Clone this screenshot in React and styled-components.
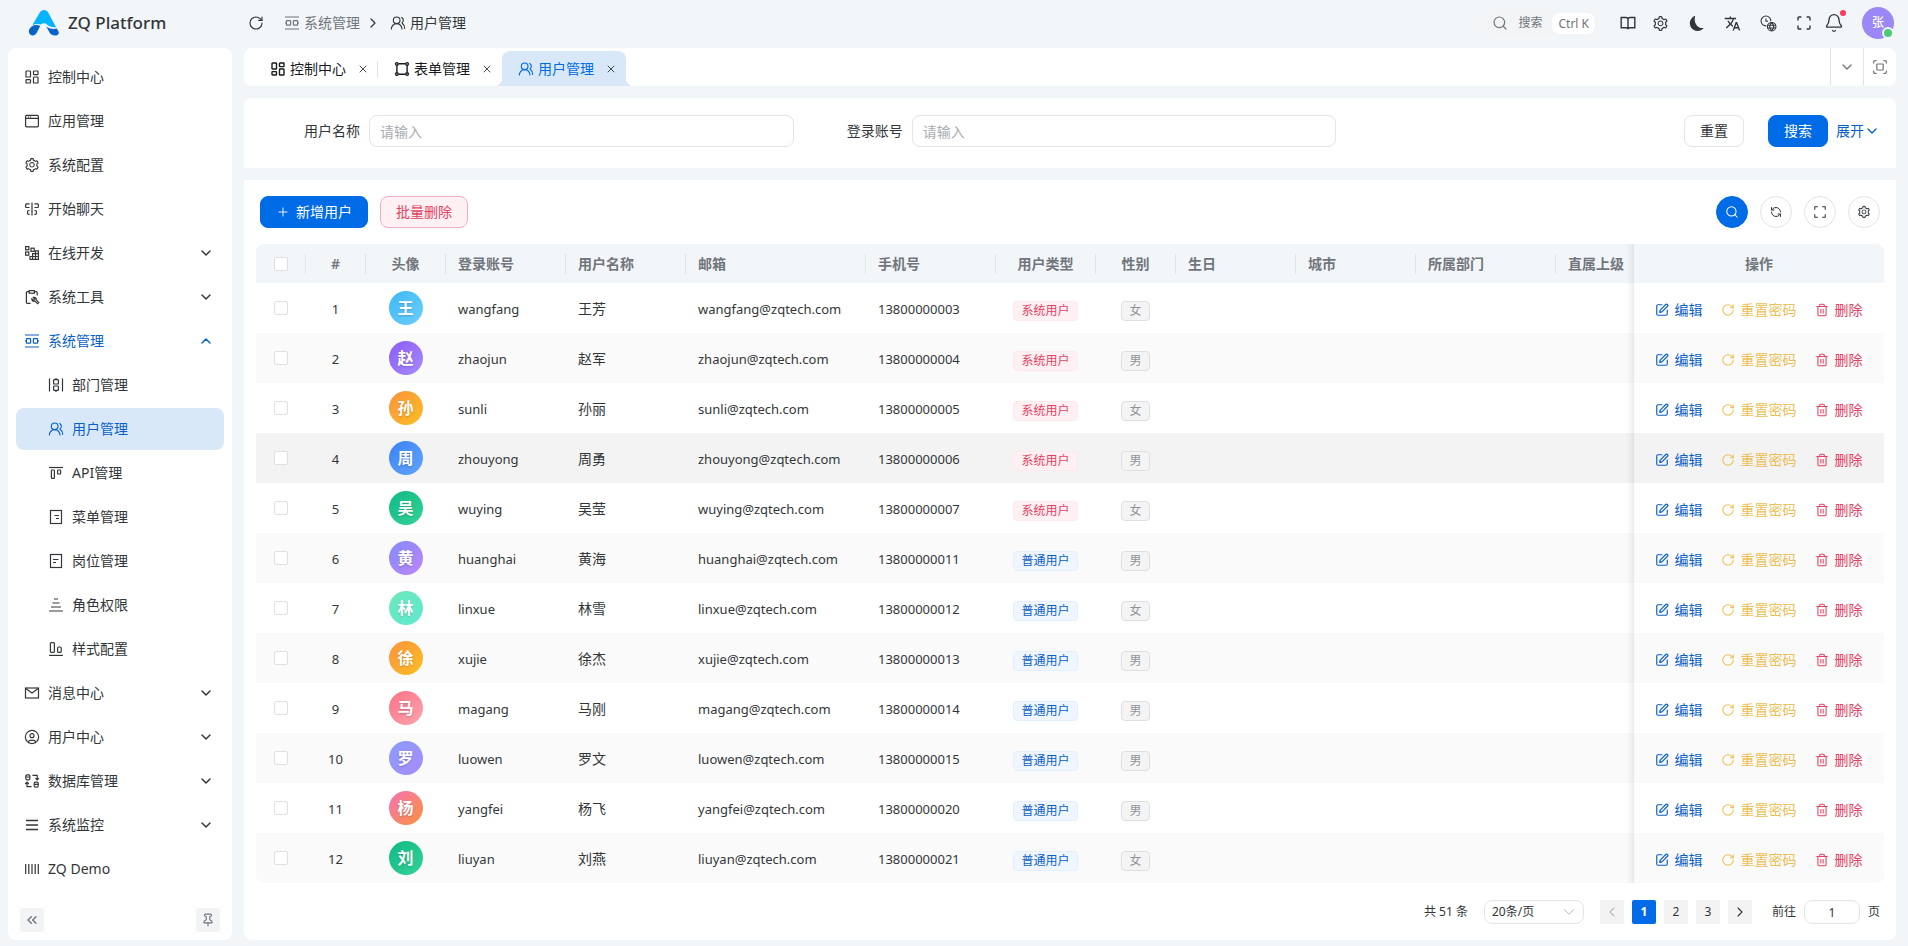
import React from 'react';
import styled, { createGlobalStyle, css } from 'styled-components';
import {
  Bell,
  ChevronDown,
  ChevronLeft,
  ChevronRight,
  ChevronUp,
  ChevronsLeft,
  CircleUser,
  Pin,
  Plus,
  RefreshCcw,
  RotateCw,
  Search,
  SquarePen,
  Trash2,
  UsersRound,
  X,
} from 'lucide-react';
import { AiOutlineSetting } from 'react-icons/ai';
import { MdTranslate } from 'react-icons/md';

const colors = {
  primary: '#006be6',
  link: '#0960c8',
  activeBg: '#d9e8f9',
  page: '#f2f6f9',
  text: '#323639',
  muted: '#71757c',
  border: '#e4e4e7',
  danger: '#e4405f',
  warning: '#ecbf55',
};

const GlobalStyle = createGlobalStyle`
  *,
  *::before,
  *::after {
    box-sizing: border-box;
  }

  body {
    margin: 0;
    background: ${colors.page};
    color: ${colors.text};
    font-family: "Noto Sans", "Noto Sans CJK SC", sans-serif;
    font-size: 14px;
    line-height: 20px;
  }

  button, input, select {
    font: inherit;
    color: inherit;
  }

  button {
    display: inline-flex;
    align-items: center;
    justify-content: center;
    padding: 0;
    border: 0;
    background: none;
    cursor: pointer;
  }

  svg {
    flex: none;
  }
`;

// 16x16 line icons for the menu, the tabs and the header
const glyphs = {
  dashboard: (
    <>
      <rect x="2" y="2" width="4.5" height="6" rx="0.6" />
      <rect x="9.5" y="2" width="4.5" height="3.6" rx="0.6" />
      <rect x="2" y="10.6" width="4.5" height="3.4" rx="0.6" />
      <rect x="9.5" y="8" width="4.5" height="6" rx="0.6" />
    </>
  ),
  app: (
    <>
      <rect x="1.6" y="2.4" width="12.8" height="11.4" rx="1" />
      <path d="M1.6 5.4h12.8M4 3.9h.8M6.2 3.9H7" />
    </>
  ),
  chat: (
    <>
      <path d="M8 1.4v13.2M5.6 2.9H2.6a1 1 0 0 0-1 1v1.6a1 1 0 0 0 1 1h3M5.6 9.5H4.6a1 1 0 0 0-1 1v1.800a1 1 0 0 0 1 1h1" />
      <path d="M10.4 2.9h3a1 1 0 0 1 1 1v1.6a1 1 0 0 1-1 1h-3M10.4 9.5h1a1 1 0 0 1 1 1v1.800a1 1 0 0 1-1 1h-1" />
    </>
  ),
  develop: (
    <>
      <rect x="1.6" y="1.6" width="3.2" height="3.2" />
      <rect x="1.6" y="7" width="3.2" height="3.2" />
      <rect x="7" y="3.2" width="3.2" height="3.2" />
      <path d="M6 14.4V11.500h8.400v2.900zM8.600 14.400V8.600h5.800v3M11.500 14.400V5.800h2.900v3" />
    </>
  ),
  tools: (
    <>
      <path d="M6.6 14.4H3.4a1 1 0 0 1-1-1V3.6a1 1 0 0 1 1-1h1.8M10.4 2.6h1.8a1 1 0 0 1 1 1v2.8" />
      <rect x="5.2" y="1.6" width="5.2" height="2.6" />
      <path d="M12.2 10.8l2.6 2.7-1.2 1.2-2.7-2.6c-1.6.6-3.2-.4-3.1-2.2l1.7 1.4 1.3-1.3-1.5-1.6c1.9-.4 3.3.7 2.9 2.4z" />
    </>
  ),
  system: (
    <>
      <path d="M1 2h14M1 14h14M1 8h1M15 8h-1" />
      <rect x="2.4" y="5.6" width="4.2" height="4.6" rx="0.6" />
      <rect x="9.4" y="5.6" width="4.2" height="4.6" rx="0.6" />
    </>
  ),
  dept: (
    <>
      <path d="M1.5 1.400v13.200M14.500 1.400v13.200M8 1v1.400M8 13.600V15" />
      <rect x="5.6" y="2.6" width="4.800" height="4.400" rx="0.6" />
      <rect x="5.6" y="9" width="4.800" height="4.400" rx="0.6" />
    </>
  ),
  api: (
    <>
      <path d="M1 2.5h14" />
      <rect x="3.4" y="5" width="3" height="8.4" rx="0.6" />
      <rect x="9.6" y="5" width="3" height="4" rx="0.6" />
    </>
  ),
  menu: (
    <>
      <rect x="2.5" y="1.5" width="11" height="13" />
      <path d="M6.5 6.5H11M8 9.500H11" />
    </>
  ),
  post: (
    <>
      <rect x="2.5" y="1.5" width="11" height="13" />
      <path d="M5 6.5h5.500M5 9.500h3" />
    </>
  ),
  role: <path d="M6 2h4M4.5 6h7M3 10h10M1 14h14" />,
  style: (
    <>
      <path d="M1 14.4h14" />
      <rect x="2.4" y="1.6" width="4" height="9.8" rx="1" />
      <rect x="9.6" y="6" width="3.6" height="5.4" rx="1" />
    </>
  ),
  mail: (
    <>
      <rect x="1.5" y="3" width="13" height="10" />
      <path d="M1.8 3.4L8 8l6.2-4.6" />
    </>
  ),
  database: (
    <>
      <rect x="1.8" y="1.8" width="4" height="5" rx="1.2" />
      <rect x="10.2" y="9.2" width="4" height="5" rx="1.2" />
      <path d="M1.8 4h4M10.2 11.4h4M8.4 2.4h4.8v4.4M11.4 5.2l1.8 1.8L15 5.2M7.6 13.6H3V9.4M1.2 11L3 9.2 4.8 11" />
    </>
  ),
  monitor: <path d="M2 3.5h12M2 8h12M2 12.5h12" strokeWidth="1.6" />,
  barcode: <path d="M1.7 3v10M4.8 3v10M8 3v10M11.2 3v10M14.3 3v10" />,
  form: (
    <>
      <path d="M4.5 2.7h7M4.5 13.3h7M2.9 4.5v7M13.1 4.5v7" />
      <circle cx="2.9" cy="2.9" r="1.3" />
      <circle cx="13.1" cy="2.9" r="1.3" />
      <circle cx="2.9" cy="13.1" r="1.3" />
      <circle cx="13.1" cy="13.1" r="1.3" />
    </>
  ),
  book: (
    <path d="M1.2 2.5h4.6C7 2.5 8 3.4 8 4.5c0-1.1 1-2 2.2-2h4.6v10.3h-4.6c-1.2 0-2.2.6-2.2 1.5 0-.9-1-1.5-2.2-1.5H1.2zM8 4.5v9.5" />
  ),
  timezone: (
    <>
      <path d="M6 10.2A4.6 4.6 0 1 1 10.2 5.8M5.6 3.2v2.6h2" />
      <circle cx="11" cy="11" r="4" />
      <path d="M7.2 9.7h7.6M7.2 12.3h7.6M11 7c-2.2 2.4-2.2 5.6 0 8M11 7c2.2 2.4 2.2 5.6 0 8" />
    </>
  ),
  fullscreen: (
    <path d="M2 5.4V3a1 1 0 0 1 1-1h2.4M10.6 2H13a1 1 0 0 1 1 1v2.4M14 10.6V13a1 1 0 0 1-1 1h-2.4M5.4 14H3a1 1 0 0 1-1-1v-2.4" />
  ),
  expand: <path d="M2 5.5V2h3.5M10.5 2H14v3.5M14 10.5V14h-3.5M5.5 14H2v-3.5" />,
  focus: (
    <>
      <path d="M1.6 4.6V3a1.4 1.4 0 0 1 1.4-1.4h1.6M11.4 1.6H13A1.4 1.4 0 0 1 14.4 3v1.6M14.4 11.4V13a1.4 1.4 0 0 1-1.4 1.4h-1.6M4.6 14.4H3A1.4 1.4 0 0 1 1.6 13v-1.6" />
      <rect x="4.8" y="5" width="6.4" height="6" rx="0.4" />
    </>
  ),
  moon: (
    <path
      d="M6.800.8A7.300 7.300 0 1 0 14.800 12.200C9.200 13.200 4.800 7 6.800.8z"
      fill="currentColor"
      stroke="none"
    />
  ),
};

const Glyph = ({ name, size = 16, weight = 1.2 }) => (
  <svg
    width={size}
    height={size}
    viewBox="0 0 16 16"
    fill="none"
    stroke="currentColor"
    strokeWidth={weight}
    aria-hidden="true"
  >
    {glyphs[name]}
  </svg>
);

const Page = styled.div`
  display: flex;
  flex-direction: column;
  min-height: 100vh;
`;

const Header = styled.header`
  display: flex;
  align-items: center;
  height: 48px;
  padding: 0 14px 2px 8px;
`;

const Brand = styled.a`
  display: flex;
  align-items: center;
  gap: 8px;
  width: 236px;
  padding-left: 20px;
  color: inherit;
  font-size: 17px;
  font-weight: 500;
  text-decoration: none;
`;

const IconButton = styled.button`
  width: ${({ $width }) => $width || 32}px;
  height: 32px;
  margin-left: ${({ $gap }) => $gap || 0}px;
`;

const Crumbs = styled.nav`
  display: flex;
  align-items: center;
  margin-left: 16px;

  & > svg {
    margin: 0 9px 0 5px;
  }
`;

const Crumb = styled.a`
  display: flex;
  align-items: center;
  gap: 4px;
  color: ${({ $current }) => ($current ? colors.text : colors.muted)};
  text-decoration: none;
`;

const HeaderTools = styled.div`
  display: flex;
  align-items: center;
  margin-left: auto;
`;

const SearchPill = styled.button`
  gap: 10px;
  height: 26px;
  margin-right: 15px;
  padding: 0 2px 0 8px;
  border-radius: 13px;
  background: #f3f4f5;
  color: ${colors.muted};
  font-size: 12px;
`;

const Shortcut = styled.kbd`
  padding: 0 6px;
  border-radius: 8px;
  background: #fff;
  font-family: inherit;
  line-height: 21px;
`;

const BellButton = styled(IconButton)`
  position: relative;

  &::after {
    content: '';
    position: absolute;
    top: 3px;
    right: 2px;
    width: 6px;
    height: 6px;
    border-radius: 50%;
    background: #ff385c;
  }
`;

const Profile = styled.button`
  position: relative;
  width: 32px;
  height: 32px;
  margin: 0 0 0 14px;
  border-radius: 50%;
  background: #9b87f5;
  color: #fff;
  font-size: 12px;
  font-weight: 500;

  &::after {
    content: '';
    position: absolute;
    right: 0;
    bottom: 0;
    width: 12px;
    height: 12px;
    border: 2px solid ${colors.page};
    border-radius: 50%;
    background: #4fc87a;
  }
`;

const Body = styled.div`
  display: grid;
  flex: 1;
  grid-template-columns: 224px minmax(0, 1fr);
  gap: 12px;
  padding: 0 12px 6px 8px;
`;

const Sidebar = styled.aside`
  display: flex;
  flex-direction: column;
  padding: 8px 8px 0;
  border-radius: 8px;
  background: #fff;
`;

const MenuList = styled.nav`
  display: flex;
  flex: 1;
  flex-direction: column;
  gap: 2px;
`;

const MenuItem = styled.a`
  display: flex;
  align-items: center;
  gap: 8px;
  height: 42px;
  padding: 0 10px 0 ${({ $child }) => ($child ? 32 : 8)}px;
  border-radius: 8px;
  background: ${({ $active }) => ($active ? colors.activeBg : 'transparent')};
  color: ${({ $active, $open }) => ($active || $open ? colors.link : 'inherit')};
  text-decoration: none;

  & > svg:last-child:not(:first-child) {
    margin-left: auto;
  }
`;

const SidebarFoot = styled.div`
  display: flex;
  justify-content: space-between;
  padding: 8px 4px;
`;

const SmallButton = styled.button`
  width: 24px;
  height: 24px;
  border-radius: 3px;
  background: #f3f4f5;
  color: ${colors.muted};
`;

const Main = styled.main`
  display: flex;
  flex-direction: column;
  gap: 12px;
`;

const TabBar = styled.div`
  display: flex;
  align-items: stretch;
  height: 38px;
  padding-left: 10px;
  border-radius: 8px;
  background: #fff;
`;

const flare = css`
  content: '';
  position: absolute;
  bottom: 0;
  width: 8px;
  height: 8px;
`;

const Tab = styled.div`
  position: relative;
  display: flex;
  align-items: center;
  width: 124px;
  margin-top: 3px;
  padding: 0 8px 0 16px;
  border-radius: 8px 8px 0 0;

  ${({ $active }) =>
    $active &&
    css`
      background: ${colors.activeBg};
      color: ${colors.primary};

      &::before {
        ${flare}
        left: -8px;
        background: radial-gradient(circle at 0 0, transparent 8px, ${colors.activeBg} 8px);
      }

      &::after {
        ${flare}
        right: -8px;
        background: radial-gradient(circle at 100% 0, transparent 8px, ${colors.activeBg} 8px);
      }
    `}
`;

const TabLink = styled.a`
  display: flex;
  flex: 1;
  align-items: center;
  gap: 4px;
  color: ${({ $active }) => ($active ? colors.primary : '#17191c')};
  text-decoration: none;
`;

const TabClose = styled.button`
  width: 14px;
  height: 14px;
  color: ${colors.text};
`;

const TabDivider = styled.span`
  align-self: center;
  width: 1px;
  height: 16px;
  margin: 4px 0 0 -1px;
  background: ${colors.border};
`;

const TabTools = styled.div`
  display: flex;
  margin-left: auto;
`;

const TabTool = styled.button`
  width: 33px;
  border-left: 1px solid ${colors.border};
  color: ${colors.muted};
`;

const Filters = styled.form`
  display: grid;
  grid-template-columns: repeat(3, minmax(0, 1fr));
  padding: 17px 12px 21px;
  border-radius: 8px 8px 0 0;
  background: #fff;
`;

const Field = styled.div`
  display: flex;
  align-items: center;
  padding-right: 5px;
`;

const FieldLabel = styled.label`
  flex: none;
  width: 113px;
  padding-right: 9px;
  text-align: right;
`;

const Input = styled.input`
  flex: 1;
  min-width: 0;
  height: 32px;
  padding: 0 10px;
  border: 1px solid ${colors.border};
  border-radius: 8px;
  background: #fff;
  outline: 0;

  &::placeholder {
    color: #a8abb2;
  }
`;

const FilterActions = styled.div`
  display: flex;
  align-items: center;
  justify-content: flex-end;
  padding-right: 4px;
`;

const variants = {
  plain: css`
    border: 1px solid ${colors.border};
    background: #fff;
  `,
  primary: css`
    border: 1px solid ${colors.primary};
    background: ${colors.primary};
    color: #fff;
  `,
  danger: css`
    border: 1px solid #f8b0c0;
    background: #fff1f3;
    color: ${colors.danger};
  `,
};

const Button = styled.button`
  gap: 6px;
  height: 32px;
  padding: 0 15px;
  border-radius: 8px;
  white-space: nowrap;
  ${({ $variant }) => variants[$variant || 'plain']};
`;

const WideButton = styled(Button)`
  width: 60px;
  margin-right: ${({ $gap }) => $gap}px;
  padding: 0;
`;

const ExpandButton = styled.button`
  color: ${colors.link};
`;

const ListCard = styled.section`
  display: flex;
  flex: 1;
  flex-direction: column;
  padding: 16px 12px;
  border-radius: 0 0 8px 8px;
  background: #fff;
`;

const Toolbar = styled.div`
  display: flex;
  gap: 12px;
  padding: 0 4px 16px;
`;

const ToolbarRight = styled.div`
  display: flex;
  gap: 12px;
  margin-left: auto;
`;

const RoundButton = styled.button`
  width: 32px;
  height: 32px;
  border-radius: 50%;
  ${({ $variant }) => variants[$variant || 'plain']};
`;

const TableScroll = styled.div`
  overflow-x: auto;
  border-radius: 8px;
  scrollbar-width: none;
`;

const Table = styled.table`
  width: 100%;
  min-width: 1670px;
  table-layout: fixed;
  border-collapse: separate;
  border-spacing: 0;
`;

const stickyCell = css`
  position: sticky;
  right: 0;
  z-index: 1;

  &::before {
    content: '';
    position: absolute;
    top: 0;
    bottom: 0;
    left: -10px;
    width: 10px;
    box-shadow: inset -10px 0 10px -10px rgba(0, 0, 0, 0.15);
  }
`;

const HeadCell = styled.th`
  height: 39px;
  padding: 0;
  background: ${colors.page};
  color: ${colors.muted};
  font-weight: 600;
  text-align: ${({ $align }) => $align || 'left'};
  ${({ $sticky }) => $sticky && stickyCell};
`;

const HeadLabel = styled.div`
  display: grid;
  align-items: center;
  height: 20px;
  padding: 0 12px;
  border-right: 1px solid ${({ $last }) => ($last ? 'transparent' : '#e1e5ea')};
`;

const rowBackground = ({ $index }) => {
  if ($index === 3) return '#f3f3f3';
  return $index % 2 ? '#fafafa' : '#fff';
};

const Row = styled.tr`
  background: ${rowBackground};
`;

const Cell = styled.td`
  height: 50px;
  padding: ${({ $text }) => ($text ? 2 : 0)}px 13px 0 12px;
  background: inherit;
  text-align: ${({ $align }) => $align || 'left'};
  font-size: ${({ $latin }) => ($latin ? 13 : 14)}px;
  ${({ $sticky }) => $sticky && stickyCell};
`;

const Checkbox = styled.input.attrs({ type: 'checkbox' })`
  display: block;
  appearance: none;
  width: 14px;
  height: 14px;
  margin: 0 auto;
  border: 1px solid #dfe0e3;
  border-radius: 2px;
  background: #fff;
`;

const Avatar = styled.div`
  display: flex;
  align-items: center;
  justify-content: center;
  width: 34px;
  height: 34px;
  margin: 0 auto;
  border-radius: 50%;
  background: linear-gradient(135deg, ${({ $from }) => $from}, ${({ $to }) => $to});
  color: #fff;
  font-size: 16px;
  font-weight: 700;
  text-shadow: 0 1px 2px rgba(0, 0, 0, 0.2);
`;

const tags = {
  系统用户: ['#fff1f3', '#ffe9ed', colors.danger],
  普通用户: ['#eff6ff', '#e4effc', colors.link],
};

const Tag = styled.span`
  display: inline-block;
  height: 20px;
  margin-top: 4px;
  padding: 0 7px;
  border: 1px solid ${({ $tone }) => $tone[1]};
  border-radius: 4px;
  background: ${({ $tone }) => $tone[0]};
  color: ${({ $tone }) => $tone[2]};
  font-size: 12px;
  line-height: 18px;
  vertical-align: middle;
`;

const Actions = styled.div`
  display: flex;
  justify-content: center;
  gap: 18px;
  padding-top: 4px;
`;

const Action = styled.button`
  gap: 6px;
  color: ${({ $color }) => $color};
  white-space: nowrap;
`;

const Pagination = styled.nav`
  display: flex;
  align-items: center;
  justify-content: flex-end;
  gap: 8px;
  margin-top: auto;
  padding: 17px 4px 0 0;
  font-size: 12px;
`;

const PageSize = styled.label`
  display: grid;
  align-items: center;
  width: 100px;
  margin: 0 8px;

  & > * {
    grid-area: 1 / 1;
  }

  & > svg {
    justify-self: end;
    margin-right: 6px;
    color: #a8abb2;
    pointer-events: none;
  }
`;

const Select = styled.select`
  appearance: none;
  width: 100%;
  height: 24px;
  padding: 0 7px;
  border: 1px solid ${colors.border};
  border-radius: 8px;
  background: #fff;
`;

const PageButton = styled.button`
  width: 24px;
  height: 24px;
  border-radius: 2px;
  background: ${({ $active }) => ($active ? colors.primary : '#f3f3f4')};
  color: ${({ $active, $off }) => {
    if ($active) return '#fff';
    return $off ? '#b9bbc0' : colors.text;
  }};
  font-weight: ${({ $active }) => ($active ? 700 : 400)};
`;

const Jump = styled.label`
  display: flex;
  align-items: center;
  gap: 8px;
  margin-left: 12px;
`;

const JumpInput = styled(Input)`
  flex: none;
  width: 56px;
  height: 24px;
  text-align: center;
`;

const menu = [
  { icon: 'dashboard', label: '控制中心' },
  { icon: 'app', label: '应用管理' },
  { icon: 'setting', label: '系统配置' },
  { icon: 'chat', label: '开始聊天' },
  { icon: 'develop', label: '在线开发', group: true },
  { icon: 'tools', label: '系统工具', group: true },
  { icon: 'system', label: '系统管理', group: true, open: true },
  { icon: 'dept', label: '部门管理', child: true },
  { icon: 'users', label: '用户管理', child: true, active: true },
  { icon: 'api', label: 'API管理', child: true },
  { icon: 'menu', label: '菜单管理', child: true },
  { icon: 'post', label: '岗位管理', child: true },
  { icon: 'role', label: '角色权限', child: true },
  { icon: 'style', label: '样式配置', child: true },
  { icon: 'mail', label: '消息中心', group: true },
  { icon: 'user', label: '用户中心', group: true },
  { icon: 'database', label: '数据库管理', group: true },
  { icon: 'monitor', label: '系统监控', group: true },
  { icon: 'barcode', label: 'ZQ Demo' },
];

const tabs = [
  { icon: 'dashboard', label: '控制中心' },
  { icon: 'form', label: '表单管理' },
  { icon: 'users', label: '用户管理', active: true },
];

const columns = [
  { label: '#', width: 60, align: 'center' },
  { label: '头像', width: 80, align: 'center' },
  { label: '登录账号', width: 120 },
  { label: '用户名称', width: 120 },
  { label: '邮箱', width: 180 },
  { label: '手机号', width: 130 },
  { label: '用户类型', width: 100, align: 'center' },
  { label: '性别', width: 80, align: 'center' },
  { label: '生日', width: 120 },
  { label: '城市', width: 120 },
  { label: '所属部门', width: 140 },
  { label: '直属上级', width: 120 },
];

const users = [
  ['wangfang', '王芳', '13800000003', '系统用户', '女', '#3db8f5', '#6dcff9'],
  ['zhaojun', '赵军', '13800000004', '系统用户', '男', '#8b5cf6', '#a78bfa'],
  ['sunli', '孙丽', '13800000005', '系统用户', '女', '#fb923c', '#fbbf24'],
  ['zhouyong', '周勇', '13800000006', '系统用户', '男', '#3b82f6', '#60a5fa'],
  ['wuying', '吴莹', '13800000007', '系统用户', '女', '#10b981', '#34d399'],
  ['huanghai', '黄海', '13800000011', '普通用户', '男', '#818cf8', '#c084fc'],
  ['linxue', '林雪', '13800000012', '普通用户', '女', '#6ee7b7', '#5eead4'],
  ['xujie', '徐杰', '13800000013', '普通用户', '男', '#fb923c', '#fbbf24'],
  ['magang', '马刚', '13800000014', '普通用户', '男', '#fb7185', '#fda4af'],
  ['luowen', '罗文', '13800000015', '普通用户', '男', '#8b9cfb', '#a78bfa'],
  ['yangfei', '杨飞', '13800000020', '普通用户', '男', '#f472b6', '#fb923c'],
  ['liuyan', '刘燕', '13800000021', '普通用户', '女', '#10b981', '#34d399'],
];

const genderTone = ['#f4f4f5', '#dedfe2', '#909399'];

const Icon = ({ name, weight }) => {
  if (name === 'setting') return <AiOutlineSetting size={16} />;
  if (name === 'users') return <UsersRound size={16} strokeWidth={1.7} />;
  if (name === 'user') return <CircleUser size={16} strokeWidth={1.7} />;
  return <Glyph name={name} weight={weight} />;
};

const Logo = () => (
  <svg width="32" height="28" viewBox="0 0 32 28" aria-hidden="true">
    <path
      d="M11.800 3.600C13.400.2 18.600.2 20.200 3.600L28 18c-3.600.6-6.200-.4-9-2.600-1.800-1.500-4.200-1.500-6 .1-2.400-.8-5.400-.8-8.600.6z"
      fill="#06b4fd"
    />
    <path
      d="M3.600 17.400c2.600-1.500 6-1.700 8.600-.5l-3.600 7.200c-1.200 2.300-3.400 2.900-5.200 2.100C.8 25.200.2 22.400 1.400 20z"
      fill="#0a63c6"
    />
    <path
      d="M18 17.200c2.800 2.400 6.400 3.200 10.800 2.400l1.700 2.800c1 2-.6 4.200-3.300 4.200-2.500 0-4.400-.8-5.600-3z"
      fill="#0a63c6"
    />
  </svg>
);

const SideMenu = () => (
  <MenuList aria-label="主菜单">
    {menu.map(({ icon, label, group, open, child, active }) => (
      <MenuItem key={label} href="#" $child={child} $active={active} $open={open}>
        <Icon name={icon} />
        <span>{label}</span>
        {group &&
          (open ? (
            <ChevronUp size={16} strokeWidth={2.2} />
          ) : (
            <ChevronDown size={16} strokeWidth={2.2} />
          ))}
      </MenuItem>
    ))}
  </MenuList>
);

const TopBar = () => (
  <Header>
    <Brand href="#">
      <Logo />
      ZQ Platform
    </Brand>
    <IconButton $width={24} aria-label="刷新">
      <RotateCw size={16} strokeWidth={1.7} />
    </IconButton>
    <Crumbs aria-label="面包屑">
      <Crumb href="#">
        <Glyph name="system" />
        系统管理
      </Crumb>
      <ChevronRight size={16} strokeWidth={1.8} />
      <Crumb href="#" $current>
        <Icon name="users" />
        用户管理
      </Crumb>
    </Crumbs>
    <HeaderTools>
      <SearchPill>
        <Search size={16} strokeWidth={1.8} />
        搜索
        <Shortcut>Ctrl K</Shortcut>
      </SearchPill>
      <IconButton aria-label="文档">
        <Glyph name="book" weight={1.4} />
      </IconButton>
      <IconButton aria-label="设置">
        <AiOutlineSetting size={17} />
      </IconButton>
      <IconButton $gap={4} aria-label="主题">
        <Glyph name="moon" size={17} />
      </IconButton>
      <IconButton $gap={4} aria-label="语言">
        <MdTranslate size={17} />
      </IconButton>
      <IconButton $gap={4} aria-label="时区">
        <Glyph name="timezone" size={17} weight={1} />
      </IconButton>
      <IconButton $gap={4} aria-label="全屏">
        <Glyph name="fullscreen" weight={1.4} />
      </IconButton>
      <BellButton $width={28} aria-label="通知">
        <Bell size={20} strokeWidth={1.6} />
      </BellButton>
      <Profile>张</Profile>
    </HeaderTools>
  </Header>
);

const Tabs = () => (
  <TabBar>
    {tabs.map(({ icon, label, active }, index) => (
      <React.Fragment key={label}>
        <Tab $active={active}>
          <TabLink href="#" $active={active}>
            <Icon name={icon} weight={1.4} />
            {label}
          </TabLink>
          <TabClose aria-label={`关闭${label}`}>
            <X size={12} strokeWidth={1.8} />
          </TabClose>
        </Tab>
        {index === 0 && <TabDivider />}
      </React.Fragment>
    ))}
    <TabTools>
      <TabTool aria-label="更多标签">
        <ChevronDown size={16} strokeWidth={2} />
      </TabTool>
      <TabTool aria-label="最大化">
        <Glyph name="focus" />
      </TabTool>
    </TabTools>
  </TabBar>
);

const FilterBar = () => (
  <Filters onSubmit={event => event.preventDefault()}>
    <Field>
      <FieldLabel htmlFor="name">用户名称</FieldLabel>
      <Input id="name" placeholder="请输入" />
    </Field>
    <Field>
      <FieldLabel htmlFor="account">登录账号</FieldLabel>
      <Input id="account" placeholder="请输入" />
    </Field>
    <FilterActions>
      <WideButton type="reset" $gap={24}>
        重置
      </WideButton>
      <WideButton type="submit" $variant="primary" $gap={8}>
        搜索
      </WideButton>
      <ExpandButton type="button">
        展开
        <ChevronDown size={16} strokeWidth={2} />
      </ExpandButton>
    </FilterActions>
  </Filters>
);

const UserRow = ({ user, index }) => {
  const [account, name, phone, type, gender, from, to] = user;
  return (
    <Row $index={index}>
      <Cell $align="center">
        <Checkbox aria-label={`选择${name}`} />
      </Cell>
      <Cell $align="center" $text $latin>
        {index + 1}
      </Cell>
      <Cell $align="center">
        <Avatar $from={from} $to={to}>
          {name[0]}
        </Avatar>
      </Cell>
      <Cell $text $latin>
        {account}
      </Cell>
      <Cell $text>{name}</Cell>
      <Cell $text $latin>
        {account}@zqtech.com
      </Cell>
      <Cell $text $latin>
        {phone}
      </Cell>
      <Cell $align="center" $text>
        <Tag $tone={tags[type]}>{type}</Tag>
      </Cell>
      <Cell $align="center" $text>
        <Tag $tone={genderTone}>{gender}</Tag>
      </Cell>
      <Cell />
      <Cell />
      <Cell />
      <Cell />
      <Cell $sticky>
        <Actions>
          <Action $color={colors.link}>
            <SquarePen size={14} strokeWidth={2} />
            编辑
          </Action>
          <Action $color={colors.warning}>
            <RotateCw size={14} strokeWidth={1.8} />
            重置密码
          </Action>
          <Action $color={colors.danger}>
            <Trash2 size={14} strokeWidth={1.8} />
            删除
          </Action>
        </Actions>
      </Cell>
    </Row>
  );
};

const UserTable = () => (
  <TableScroll>
    <Table>
      <colgroup>
        <col width="50" />
        {columns.map(({ label, width }) => (
          <col key={label} width={width} />
        ))}
        <col width="250" />
      </colgroup>
      <thead>
        <tr>
          <HeadCell>
            <HeadLabel>
              <Checkbox aria-label="全选" />
            </HeadLabel>
          </HeadCell>
          {columns.map(({ label, align }, index) => (
            <HeadCell key={label} $align={align}>
              <HeadLabel $last={index === columns.length - 1}>{label}</HeadLabel>
            </HeadCell>
          ))}
          <HeadCell $align="center" $sticky>
            操作
          </HeadCell>
        </tr>
      </thead>
      <tbody>
        {users.map((user, index) => (
          <UserRow key={user[0]} user={user} index={index} />
        ))}
      </tbody>
    </Table>
  </TableScroll>
);

const Pager = () => (
  <Pagination aria-label="分页">
    <span>共 51 条</span>
    <PageSize>
      <Select aria-label="每页条数">
        <option>20条/页</option>
      </Select>
      <ChevronDown size={18} strokeWidth={1.2} />
    </PageSize>
    <PageButton $off aria-label="上一页">
      <ChevronLeft size={16} strokeWidth={1.6} />
    </PageButton>
    <PageButton $active>1</PageButton>
    <PageButton>2</PageButton>
    <PageButton>3</PageButton>
    <PageButton aria-label="下一页">
      <ChevronRight size={16} strokeWidth={1.6} />
    </PageButton>
    <Jump>
      前往
      <JumpInput defaultValue="1" />
      页
    </Jump>
  </Pagination>
);

const App = () => (
  <Page>
    <GlobalStyle />
    <TopBar />
    <Body>
      <Sidebar>
        <SideMenu />
        <SidebarFoot>
          <SmallButton aria-label="收起菜单">
            <ChevronsLeft size={16} />
          </SmallButton>
          <SmallButton aria-label="固定菜单">
            <Pin size={14} />
          </SmallButton>
        </SidebarFoot>
      </Sidebar>
      <Main>
        <Tabs />
        <FilterBar />
        <ListCard>
          <Toolbar>
            <Button $variant="primary">
              <Plus size={14} strokeWidth={1.6} />
              新增用户
            </Button>
            <Button $variant="danger">批量删除</Button>
            <ToolbarRight>
              <RoundButton $variant="primary" aria-label="搜索">
                <Search size={14} strokeWidth={1.8} />
              </RoundButton>
              <RoundButton aria-label="刷新列表">
                <RefreshCcw size={12} strokeWidth={2} />
              </RoundButton>
              <RoundButton aria-label="全屏表格">
                <Glyph name="expand" size={14} />
              </RoundButton>
              <RoundButton aria-label="列设置">
                <AiOutlineSetting size={14} />
              </RoundButton>
            </ToolbarRight>
          </Toolbar>
          <UserTable />
          <Pager />
        </ListCard>
      </Main>
    </Body>
  </Page>
);

export default App;
